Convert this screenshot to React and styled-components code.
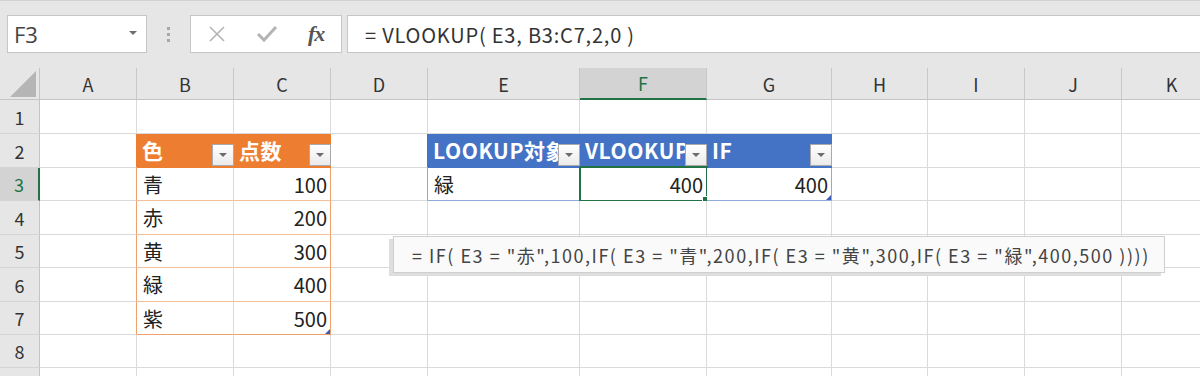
import React from 'react';
import styled, { createGlobalStyle } from 'styled-components';

const GRID = '#dadada';
const GREEN = '#217346';
const ORANGE = '#ED7D31';
const ORANGE_EDGE = '#F0A06A';
const ORANGE_LINE = '#F6BE98';
const BLUE = '#4472C4';
const BLUE_EDGE = '#8EA9DB';
const CELL_FONT = '"Noto Sans CJK JP", "Noto Sans", sans-serif';

const COLUMNS = [
  { name: 'A', width: 97 },
  { name: 'B', width: 97 },
  { name: 'C', width: 97 },
  { name: 'D', width: 97 },
  { name: 'E', width: 152 },
  { name: 'F', width: 127 },
  { name: 'G', width: 125 },
  { name: 'H', width: 96 },
  { name: 'I', width: 97 },
  { name: 'J', width: 97 },
  { name: 'K', width: 100 },
];
// the 9th row only peeks in at the bottom edge, its label is below the window
const ROW_HEIGHTS = [34, 34, 33, 34, 33, 34, 33, 33, 34];
const LAST_LABELLED_ROW = 8;

const TEXT = {
  B2: '色', C2: '点数',
  B3: '青', C3: '100',
  B4: '赤', C4: '200',
  B5: '黄', C5: '300',
  B6: '緑', C6: '400',
  B7: '紫', C7: '500',
  E2: 'LOOKUP対象', F2: 'VLOOKUP', G2: 'IF',
  E3: '緑', F3: '400', G3: '400',
};

const TABLES = [
  { top: 2, bottom: 7, left: 2, right: 3, head: ORANGE, edge: ORANGE_EDGE, line: ORANGE_LINE },
  { top: 2, bottom: 3, left: 5, right: 7, head: BLUE, edge: BLUE_EDGE, line: BLUE_EDGE },
];

const SELECTED = { row: 3, col: 6 };

const GlobalStyle = createGlobalStyle`
  html, body {
    margin: 0;
    padding: 0;
    background: #fff;
  }
  body {
    font-family: ${CELL_FONT};
  }
`;

const Window = styled.div`
  position: relative;
  width: 1200px;
  height: 376px;
  overflow: hidden;
  background: #fff;
`;

const Toolbar = styled.div`
  display: flex;
  align-items: flex-start;
  height: 68px;
  box-sizing: border-box;
  padding: 14px 0 0 7px;
  background: #e6e6e6;
  border-top: 1px solid #d2d2d2;
`;

const NameBox = styled.div`
  display: flex;
  align-items: center;
  justify-content: space-between;
  width: 140px;
  height: 38px;
  box-sizing: border-box;
  padding: 0 9px 0 6px;
  background: #fff;
  border: 1px solid #c6c6c6;
  font-family: "Open Sans", "Noto Sans", sans-serif;
  font-size: 22px;
  color: #444;
`;

const Caret = styled.span`
  width: 0;
  height: 0;
  border-left: 4px solid transparent;
  border-right: 4px solid transparent;
  border-top: 4px solid #6e6e6e;
  margin-top: -2px;
`;

const Dots = styled.div`
  display: flex;
  flex-direction: column;
  align-items: center;
  justify-content: center;
  gap: 3px;
  width: 43px;
  height: 38px;
  > span {
    width: 3px;
    height: 3px;
    background: #a8a8a8;
  }
`;

const FxGroup = styled.div`
  display: flex;
  align-items: center;
  width: 152px;
  height: 38px;
  box-sizing: border-box;
  padding-left: 1px;
  background: #fff;
  border: 1px solid #c6c6c6;
`;

const IconSlot = styled.div`
  display: flex;
  align-items: center;
  justify-content: center;
  width: 50px;
  height: 36px;
`;

const FxLabel = styled.span`
  font-family: "Liberation Serif", "DejaVu Serif", serif;
  font-style: italic;
  font-weight: bold;
  font-size: 22px;
  color: #555;
  letter-spacing: -1px;
`;

const FormulaBox = styled.div`
  flex: 1;
  display: flex;
  align-items: center;
  height: 38px;
  box-sizing: border-box;
  margin-left: 5px;
  padding-left: 17px;
  background: #fff;
  border: 1px solid #c6c6c6;
  border-right: none;
  font-family: ${CELL_FONT};
  font-size: 20px;
  letter-spacing: 0.8px;
  color: #333;
  white-space: pre;
`;

const Sheet = styled.div`
  display: grid;
  grid-template-columns: 40px ${COLUMNS.map((c) => `${c.width}px`).join(' ')};
  grid-template-rows: 32px ${ROW_HEIGHTS.map((h) => `${h}px`).join(' ')};
`;

const Corner = styled.div`
  display: flex;
  align-items: flex-end;
  justify-content: flex-end;
  padding: 0 3px 2px 0;
  background: #e6e6e6;
  border-right: 1px solid #c4c4c4;
  border-bottom: 1px solid #c4c4c4;
  box-sizing: border-box;
`;

const ColHead = styled.div`
  display: flex;
  align-items: center;
  justify-content: center;
  box-sizing: border-box;
  background: ${(p) => (p.$active ? '#d3d3d3' : '#e6e6e6')};
  border-right: 1px solid #c8c8c8;
  border-bottom: ${(p) => (p.$active ? `2px solid ${GREEN}` : '1px solid #c4c4c4')};
  font-family: ${CELL_FONT};
  font-size: 18px;
  color: ${(p) => (p.$active ? GREEN : '#333')};
`;

const RowHead = styled.div`
  display: flex;
  align-items: center;
  justify-content: center;
  box-sizing: border-box;
  background: ${(p) => (p.$active ? '#d3d3d3' : '#e6e6e6')};
  border-right: ${(p) => (p.$active ? `2px solid ${GREEN}` : '1px solid #c4c4c4')};
  border-bottom: 1px solid #d4d4d4;
  font-family: ${CELL_FONT};
  font-size: 18px;
  color: ${(p) => (p.$active ? GREEN : '#333')};
`;

const Cell = styled.div`
  position: relative;
  display: flex;
  align-items: center;
  justify-content: ${(p) => (p.$numeric ? 'flex-end' : 'flex-start')};
  box-sizing: border-box;
  min-width: 0;
  padding: ${(p) => (p.$numeric ? '0 3px 0 0' : '0 0 0 6px')};
  background: ${(p) => p.$bg};
  border-right: 1px solid ${(p) => p.$right};
  border-bottom: 1px solid ${(p) => p.$bottom};
  font-family: ${CELL_FONT};
  font-size: 20px;
  color: #222;
  white-space: nowrap;
`;

const HeadCell = styled(Cell)`
  align-items: stretch;
  padding: 0 0 1px 5px;
  color: #fff;
  font-weight: bold;
  font-size: 21px;
  letter-spacing: 0.6px;
`;

// Excel clips header text at the filter button, as in the screenshot
const HeadText = styled.span`
  flex: 1;
  min-width: 0;
  overflow: hidden;
  display: flex;
  align-items: center;
`;

const FilterButton = styled.span`
  flex: none;
  align-self: flex-end;
  display: flex;
  align-items: center;
  justify-content: center;
  width: 22px;
  height: 22px;
  box-sizing: border-box;
  margin-right: -1px;
  background: linear-gradient(#fefefe, #ebebeb);
  border: 1px solid #a9a9a9;
  &::after {
    content: '';
    border-left: 4px solid transparent;
    border-right: 4px solid transparent;
    border-top: 4px solid #6b6b6b;
  }
`;

const Selection = styled.span`
  position: absolute;
  top: -2px;
  left: -1px;
  right: -2px;
  bottom: -2px;
  border: 2px solid ${GREEN};
  pointer-events: none;
  &::after {
    content: '';
    position: absolute;
    right: -4px;
    bottom: -4px;
    width: 6px;
    height: 6px;
    background: ${GREEN};
    border: 1px solid #fff;
  }
`;

const ResizeMark = styled.span`
  position: absolute;
  right: 0;
  bottom: 0;
  width: 0;
  height: 0;
  border-left: 5px solid transparent;
  border-bottom: 5px solid #3b5bb5;
`;

const Tooltip = styled.div`
  position: absolute;
  left: 393px;
  top: 236px;
  width: 772px;
  height: 37px;
  box-sizing: border-box;
  display: flex;
  align-items: center;
  padding-left: 18px;
  background: #fafafa;
  border: 1px solid #cfcfcf;
  box-shadow: -4px 3px 0 #dedede;
  font-family: ${CELL_FONT};
  font-size: 18px;
  letter-spacing: 1.52px;
  color: #444;
  white-space: pre;
`;

function cellStyle(r, c) {
  let bg = '#fff';
  let right = GRID;
  let bottom = GRID;
  let head = false;
  for (const t of TABLES) {
    const inRows = r >= t.top && r <= t.bottom;
    const inCols = c >= t.left && c <= t.right;
    if (inRows && inCols) {
      if (r === t.top) {
        head = true;
        bg = t.head;
        right = t.head;
        bottom = t.head;
      } else {
        bottom = r === t.bottom ? t.edge : t.line;
        right = c === t.right ? t.edge : GRID;
      }
    } else if (inRows && c === t.left - 1) {
      right = r === t.top ? t.head : t.edge;
    }
  }
  return { bg, right, bottom, head };
}

const XIcon = () => (
  <svg width="20" height="20" viewBox="0 0 20 20">
    <path d="M3 3 L17 17 M17 3 L3 17" stroke="#b4b4b4" strokeWidth="1.6" fill="none" />
  </svg>
);

const CheckIcon = () => (
  <svg width="22" height="20" viewBox="0 0 22 20">
    <path d="M2 10 L8 16 L20 3" stroke="#b4b4b4" strokeWidth="3" fill="none" />
  </svg>
);

const CornerMark = () => (
  <svg width="26" height="26" viewBox="0 0 26 26">
    <polygon points="26,0 26,26 0,26" fill="#b5b5b5" />
  </svg>
);

function SheetCell({ r, c }) {
  const key = `${COLUMNS[c - 1].name}${r}`;
  const text = TEXT[key];
  const s = cellStyle(r, c);
  const numeric = text !== undefined && /^\d+$/.test(text);
  const selected = r === SELECTED.row && c === SELECTED.col;
  const resize = key === 'C7' || key === 'G3';

  if (s.head) {
    return (
      <HeadCell $bg={s.bg} $right={s.right} $bottom={s.bottom}>
        <HeadText>{text}</HeadText>
        <FilterButton />
      </HeadCell>
    );
  }
  return (
    <Cell $bg={s.bg} $right={s.right} $bottom={s.bottom} $numeric={numeric}>
      {text}
      {resize && <ResizeMark />}
      {selected && <Selection />}
    </Cell>
  );
}

export default function App() {
  return (
    <Window>
      <GlobalStyle />
      <Toolbar>
        <NameBox>
          <span>F3</span>
          <Caret />
        </NameBox>
        <Dots>
          <span />
          <span />
          <span />
        </Dots>
        <FxGroup>
          <IconSlot><XIcon /></IconSlot>
          <IconSlot><CheckIcon /></IconSlot>
          <IconSlot><FxLabel>fx</FxLabel></IconSlot>
        </FxGroup>
        <FormulaBox>= VLOOKUP( E3, B3:C7,2,0 )</FormulaBox>
      </Toolbar>
      <Sheet>
        <Corner><CornerMark /></Corner>
        {COLUMNS.map((col, i) => (
          <ColHead key={col.name} $active={i + 1 === SELECTED.col}>{col.name}</ColHead>
        ))}
        {ROW_HEIGHTS.map((_, ri) => {
          const r = ri + 1;
          return (
            <React.Fragment key={r}>
              <RowHead $active={r === SELECTED.row}>{r <= LAST_LABELLED_ROW ? r : ''}</RowHead>
              {COLUMNS.map((col, ci) => (
                <SheetCell key={col.name} r={r} c={ci + 1} />
              ))}
            </React.Fragment>
          );
        })}
      </Sheet>
      <Tooltip>= IF( E3 = "赤",100,IF( E3 = "青",200,IF( E3 = "黄",300,IF( E3 = "緑",400,500 ))))</Tooltip>
    </Window>
  );
}
